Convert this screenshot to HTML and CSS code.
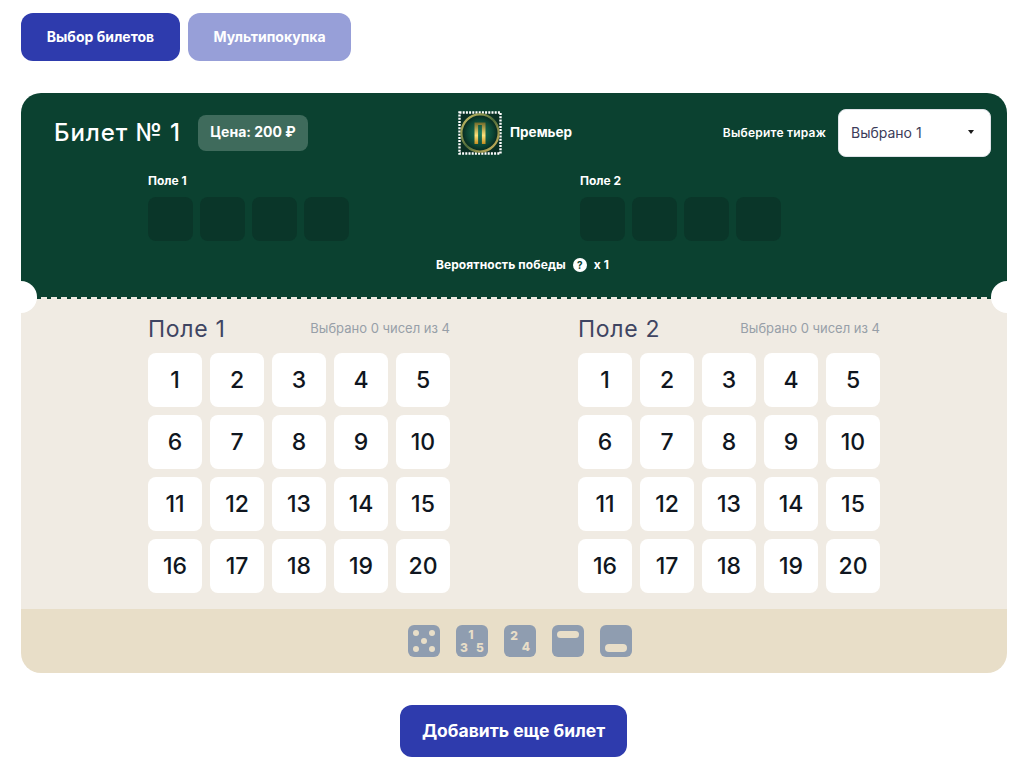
FILE: index.html
```html
<!DOCTYPE html>
<html lang="ru">
<head>
    <meta charset="UTF-8">
    <meta name="viewport" content="width=device-width, initial-scale=1.0">
    <title>Выбор билетов</title>
    <link rel="stylesheet" href="styles.css">
</head>
<body>
    <div class="tabs">
        <button class="tab tab-active">Выбор билетов</button>
        <button class="tab">Мультипокупка</button>
    </div>

    <div class="ticket">
        <span class="notch notch-left"></span>
        <span class="notch notch-right"></span>

        <div class="ticket-top">
            <div class="ticket-header">
                <div class="ticket-name">
                    <h2>Билет № 1</h2>
                    <span class="price">Цена: 200 ₽</span>
                </div>
                <div class="game">
                    <svg width="44" height="44" viewBox="0 0 44 44">
                        <defs>
                            <radialGradient id="coin" cx="50%" cy="50%" r="50%">
                                <stop offset="0" stop-color="#1a7a5c"/>
                                <stop offset="0.7" stop-color="#0c4534"/>
                                <stop offset="1" stop-color="#07251c"/>
                            </radialGradient>
                            <linearGradient id="gold" x1="0" y1="0" x2="0" y2="1">
                                <stop offset="0" stop-color="#6f6a2a"/>
                                <stop offset="0.6" stop-color="#ffe27a"/>
                                <stop offset="1" stop-color="#c48d1f"/>
                            </linearGradient>
                            <linearGradient id="ring" x1="0" y1="0" x2="1" y2="1">
                                <stop offset="0" stop-color="#d8c66a"/>
                                <stop offset="0.5" stop-color="#4d6b3a"/>
                                <stop offset="1" stop-color="#e0bc60"/>
                            </linearGradient>
                        </defs>
                        <rect x="1.5" y="1.5" width="41" height="41" fill="#0a2f24" stroke="#fff" stroke-width="2.4" stroke-dasharray="2 1.2"/>
                        <circle cx="22" cy="22" r="18.6" fill="url(#coin)" stroke="url(#ring)" stroke-width="2.2"/>
                        <path d="M16.5 33V11.5h11V33h-3.6V14h-3.8V33z" fill="url(#gold)"/>
                    </svg>
                    <span>Премьер</span>
                </div>
                <div class="draw">
                    <span>Выберите тираж</span>
                    <div class="draw-select">Выбрано 1<i class="caret"></i></div>
                </div>
            </div>

            <div class="slots">
                <div class="slot-group">
                    <div class="slot-label">Поле 1</div>
                    <div class="slot-row"><span></span><span></span><span></span><span></span></div>
                </div>
                <div class="slot-group">
                    <div class="slot-label">Поле 2</div>
                    <div class="slot-row"><span></span><span></span><span></span><span></span></div>
                </div>
            </div>

            <div class="chance">
                Вероятность победы
                <span class="help">?</span>
                x 1
            </div>
        </div>

        <div class="ticket-fields">
            <div class="field">
                <div class="field-head">
                    <h3>Поле 1</h3>
                    <span>Выбрано 0 чисел из 4</span>
                </div>
                <div class="numbers" id="field1"></div>
            </div>
            <div class="field">
                <div class="field-head">
                    <h3>Поле 2</h3>
                    <span>Выбрано 0 чисел из 4</span>
                </div>
                <div class="numbers" id="field2"></div>
            </div>
        </div>

        <div class="ticket-tools">
            <svg class="tool" viewBox="0 0 32 32">
                <rect width="32" height="32" rx="6"/>
                <g class="tool-mark">
                    <circle cx="8" cy="8" r="3"/><circle cx="24" cy="8" r="3"/>
                    <circle cx="16" cy="16" r="3"/>
                    <circle cx="8" cy="24" r="3"/><circle cx="24" cy="24" r="3"/>
                </g>
            </svg>
            <svg class="tool" viewBox="0 0 32 32">
                <rect width="32" height="32" rx="6"/>
                <g class="tool-text">
                    <text x="15" y="14">1</text>
                    <text x="8" y="27">3</text>
                    <text x="24" y="27">5</text>
                </g>
            </svg>
            <svg class="tool" viewBox="0 0 32 32">
                <rect width="32" height="32" rx="6"/>
                <g class="tool-text">
                    <text x="10" y="15">2</text>
                    <text x="22" y="26">4</text>
                </g>
            </svg>
            <svg class="tool" viewBox="0 0 32 32">
                <rect width="32" height="32" rx="6"/>
                <rect class="tool-mark" x="5" y="6" width="22" height="7" rx="3.5"/>
            </svg>
            <svg class="tool" viewBox="0 0 32 32">
                <rect width="32" height="32" rx="6"/>
                <rect class="tool-mark" x="5" y="19" width="22" height="8" rx="4"/>
            </svg>
        </div>
    </div>

    <div class="add-row">
        <button class="add-btn">Добавить еще билет</button>
    </div>

    <script src="app.js"></script>
</body>
</html>
```

FILE: styles.css
```css
* {
    margin: 0;
    padding: 0;
    box-sizing: border-box;
}
body {
    background-color: #fff;
    font-family: Inter, Roboto, sans-serif;
    padding: 13px 29px 20px 21px;
}
button {
    border: none;
    font-family: inherit;
    color: #fff;
    cursor: pointer;
}
.tabs {
    display: flex;
    gap: 8px;
    margin-bottom: 32px;
}
.tab {
    height: 48px;
    width: 163px;
    border-radius: 12px;
    padding-bottom: 2px;
    background: #979fd8;
    font-size: 14px;
    font-weight: 700;
}
.tab-active {
    width: 159px;
    background: #2e3bad;
}
.ticket {
    position: relative;
    border-radius: 20px;
    overflow: hidden;
}
.notch {
    position: absolute;
    top: 188px;
    width: 32px;
    height: 32px;
    border-radius: 50%;
    background: #fff;
    z-index: 1;
}
.notch-left {
    left: -16px;
}
.notch-right {
    right: -16px;
}
.ticket-top {
    height: 206px;
    background: #0b4130;
    color: #fff;
    padding: 16px 16px 0 33px;
    border-bottom: 2px dashed #f0ebe3;
}
.ticket-header {
    display: grid;
    grid-template-columns: 405px auto 1fr;
    align-items: center;
    height: 48px;
}
.ticket-name {
    display: flex;
    align-items: center;
    gap: 16px;
}
.ticket-name h2 {
    width: 128px;
    font-size: 24px;
    font-weight: 500;
    letter-spacing: 0.9px;
    white-space: nowrap;
    padding-bottom: 2px;
}
.price {
    background: #3f6b5c;
    border-radius: 8px;
    width: 110px;
    text-align: center;
    height: 36px;
    line-height: 34px;
    font-size: 14px;
    font-weight: 700;
    white-space: nowrap;
}
.game {
    display: flex;
    align-items: center;
    gap: 8px;
    font-size: 13.5px;
    font-weight: 700;
}
.game svg {
    margin-left: -1px;
}
.game span {
    padding-bottom: 2px;
}
.draw {
    display: flex;
    align-items: center;
    justify-content: flex-end;
    gap: 12px;
    font-size: 12px;
    font-weight: 600;
    letter-spacing: 0.2px;
}
.draw span {
    padding-bottom: 2px;
}
.draw-select {
    position: relative;
    width: 153px;
    height: 48px;
    line-height: 46px;
    padding-left: 12px;
    background: #fff;
    border: 1px solid #dfe3e8;
    border-radius: 8px;
    color: #3c3c5a;
    font-size: 14px;
    font-weight: 400;
    letter-spacing: 0;
}
.caret {
    position: absolute;
    top: 20px;
    right: 16px;
    border-top: 4px solid #1b1b1b;
    border-left: 3.5px solid transparent;
    border-right: 3.5px solid transparent;
}
.slots {
    display: flex;
    gap: 230px;
    margin: 16px 0 0 94px;
}
.slot-group {
    width: 202px;
}
.slot-label {
    font-size: 12px;
    font-weight: 700;
    line-height: 16px;
    margin-bottom: 8px;
}
.slot-row {
    display: flex;
    gap: 7px;
}
.slot-row span {
    width: 45px;
    height: 44px;
    border-radius: 8px;
    background: #0a3629;
}
.chance {
    display: flex;
    justify-content: center;
    align-items: center;
    gap: 7px;
    margin-top: 16px;
    font-size: 12px;
    font-weight: 700;
    letter-spacing: 0.1px;
}
.help {
    width: 14px;
    height: 14px;
    border-radius: 50%;
    background: #fff;
    color: #0b4130;
    font-size: 10px;
    line-height: 14px;
    text-align: center;
}
.ticket-fields {
    display: flex;
    gap: 128px;
    padding: 15px 0 16px 127px;
    background: #f0ebe3;
}
.field {
    width: 302px;
}
.field-head {
    display: flex;
    align-items: center;
    justify-content: space-between;
    height: 30px;
    margin-bottom: 9px;
    color: #979fa8;
    font-size: 13px;
}
.field-head span {
    padding-bottom: 2px;
}
.field-head h3 {
    font-size: 23px;
    font-weight: 400;
    letter-spacing: 0.7px;
    color: #3f4562;
}
.numbers {
    display: grid;
    grid-template-columns: repeat(5, 54px);
    gap: 8px;
}
.number {
    height: 54px;
    display: flex;
    align-items: center;
    justify-content: center;
    background: #fff;
    border-radius: 8px;
    font-size: 23px;
    font-weight: 500;
    color: #0f1620;
}
.ticket-tools {
    display: flex;
    justify-content: center;
    align-items: center;
    gap: 16px;
    height: 64px;
    background: #e8dec8;
    padding-left: 12px;
}
.tool {
    width: 32px;
    height: 32px;
    fill: #8f9db0;
}
.tool-mark {
    fill: #e8dec8;
}
.tool-text {
    fill: #e8dec8;
    font-family: Inter, sans-serif;
    font-size: 12px;
    font-weight: 800;
    text-anchor: middle;
}
.add-row {
    display: flex;
    justify-content: center;
    margin-top: 32px;
    padding-right: 1px;
}
.add-btn {
    width: 227px;
    height: 52px;
    border-radius: 12px;
    padding-bottom: 2px;
    background: #2e3bad;
    font-size: 17.5px;
    font-weight: 700;
}
```

FILE: app.js
```js
// сетка чисел для двух полей
['field1', 'field2'].forEach(function(id) {
    const grid = document.getElementById(id);
    for (let i = 1; i <= 20; i++) {
        const cell = document.createElement('div');
        cell.classList.add('number');
        cell.textContent = i;
        grid.appendChild(cell);
    }
});
```
